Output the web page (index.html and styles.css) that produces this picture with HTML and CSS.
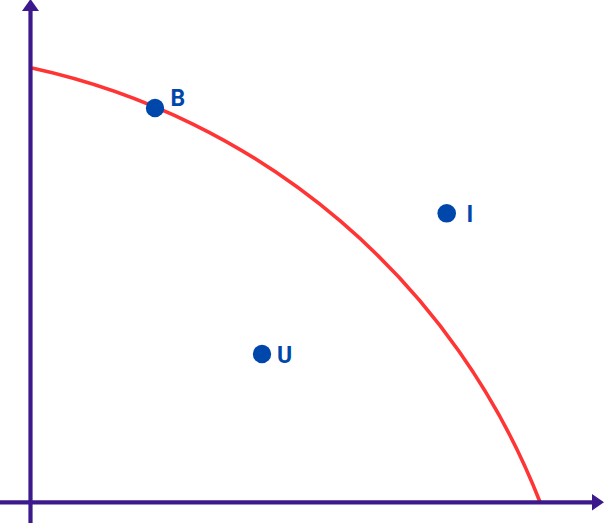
FILE: index.html
```html
<!DOCTYPE html>
<html lang="en">
<head>
<meta charset="utf-8">
<title>Production possibilities frontier</title>
<link rel="stylesheet" href="styles.css">
</head>
<body>
<div class="chart">
  <svg class="chart-svg" width="604" height="523" viewBox="0 0 604 523" xmlns="http://www.w3.org/2000/svg">
    <path class="curve" d="M32 68 A707 707 0 0 1 540 502"/>
    <line class="axis" x1="30.5" y1="9" x2="30.5" y2="523"/>
    <line class="axis" x1="0" y1="502.3" x2="594" y2="502.3"/>
    <polygon class="arrow" points="30.5,-1 39,11 22,11"/>
    <polygon class="arrow" points="604,502.3 592,494 592,510.5"/>
    <circle class="dot" cx="155" cy="108" r="9.2"/>
    <circle class="dot" cx="446.7" cy="213.3" r="9.3"/>
    <circle class="dot" cx="262" cy="354" r="9.2"/>
    <text class="label" x="170.5" y="106">B</text>
    <text class="label" x="466.5" y="221.7">I</text>
    <text class="label" x="277" y="362.7">U</text>
  </svg>
</div>
</body>
</html>
```
FILE: styles.css
```css
html, body {
  margin: 0;
  padding: 0;
  background: #ffffff;
}
.chart {
  width: 604px;
  height: 523px;
  overflow: hidden;
}
.chart-svg {
  display: block;
}
.curve {
  fill: none;
  stroke: #ff3535;
  stroke-width: 3.6;
}
.axis {
  stroke: #3c1a8c;
  stroke-width: 4.2;
}
.arrow {
  fill: #3c1a8c;
}
.dot {
  fill: #0047ab;
}
.label {
  fill: #0047ab;
  font-family: Roboto, "Liberation Sans", sans-serif;
  font-weight: 700;
  font-size: 23px;
}
```
